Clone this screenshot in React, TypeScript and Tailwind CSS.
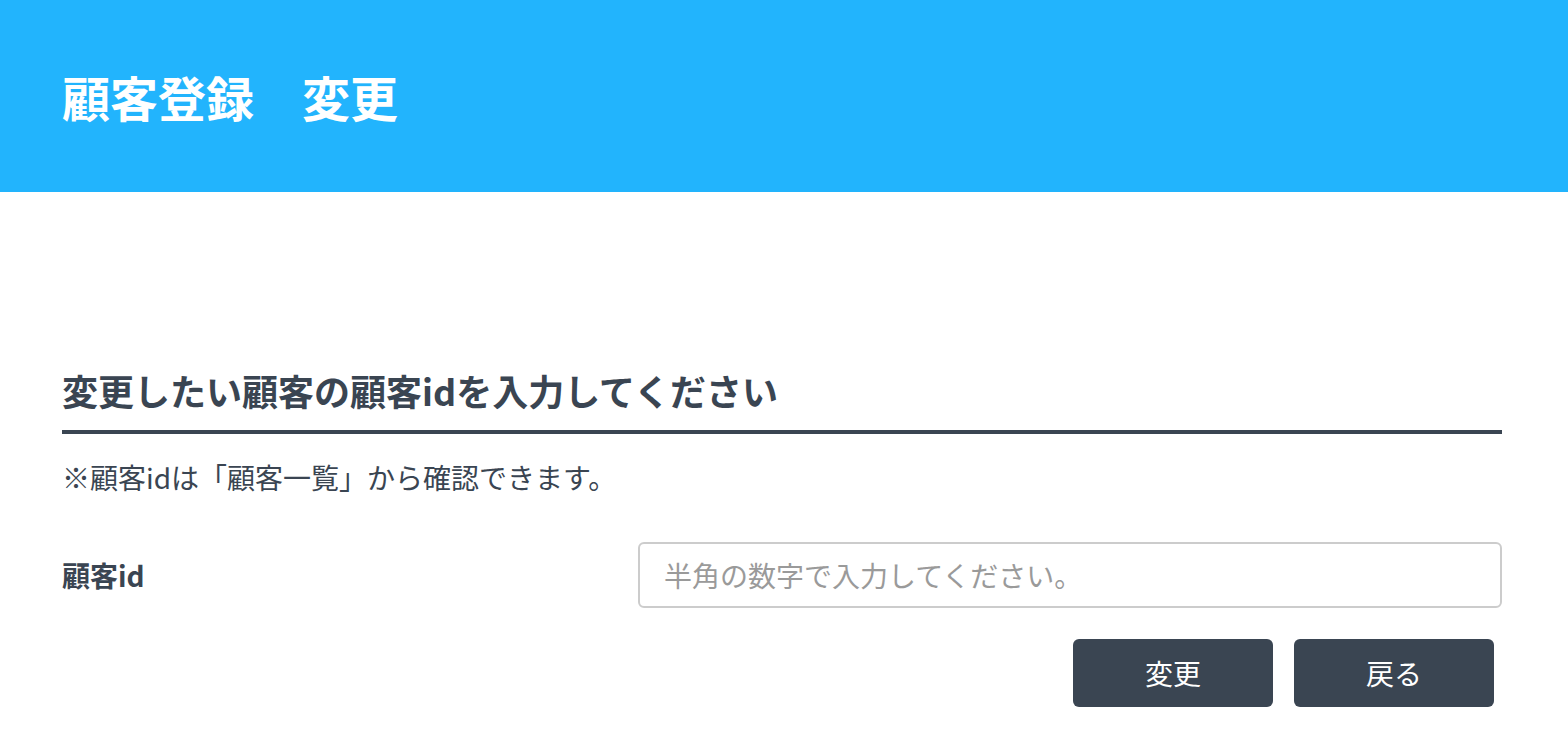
import React from 'react';

const font = { fontFamily: '"Noto Sans CJK JP", "Noto Sans", sans-serif' };

export default function App() {
    return (
        <div className="min-h-screen bg-white text-[#3a4552]" style={font}>
            {/* header bar */}
            <header className="h-[192px] bg-[#22b4fd] flex items-center px-[62px]">
                <h1 className="text-[48px] leading-none font-bold text-white">顧客登録　変更</h1>
            </header>

            <main className="pl-[62px] pr-[66px]">
                <div className="mt-[171px] pb-[13px] border-b-4 border-[#3a4552]">
                    <h2 className="text-[36px] leading-[54px] font-bold">変更したい顧客の顧客idを入力してください</h2>
                </div>
                <p className="mt-[23px] text-[28px] leading-[40px]">※顧客idは「顧客一覧」から確認できます。</p>

                <div className="mt-[45px] grid grid-cols-[576px_1fr] items-center">
                    <label className="text-[28px] leading-[40px] font-bold">顧客id</label>
                    <input
                        type="text"
                        placeholder="半角の数字で入力してください。"
                        className="h-[66px] w-full border-2 border-[#cccccc] rounded-md px-[24px] text-[28px] placeholder:text-[#9a9a9a] outline-none"
                        style={font}
                    />
                </div>

                <div className="mt-[31px] flex justify-end gap-[21px] pr-[8px]">
                    <button className="w-[200px] h-[68px] rounded-md bg-[#3a4552] text-white text-[28px]">変更</button>
                    <button className="w-[200px] h-[68px] rounded-md bg-[#3a4552] text-white text-[28px]">戻る</button>
                </div>
            </main>
        </div>
    );
}
